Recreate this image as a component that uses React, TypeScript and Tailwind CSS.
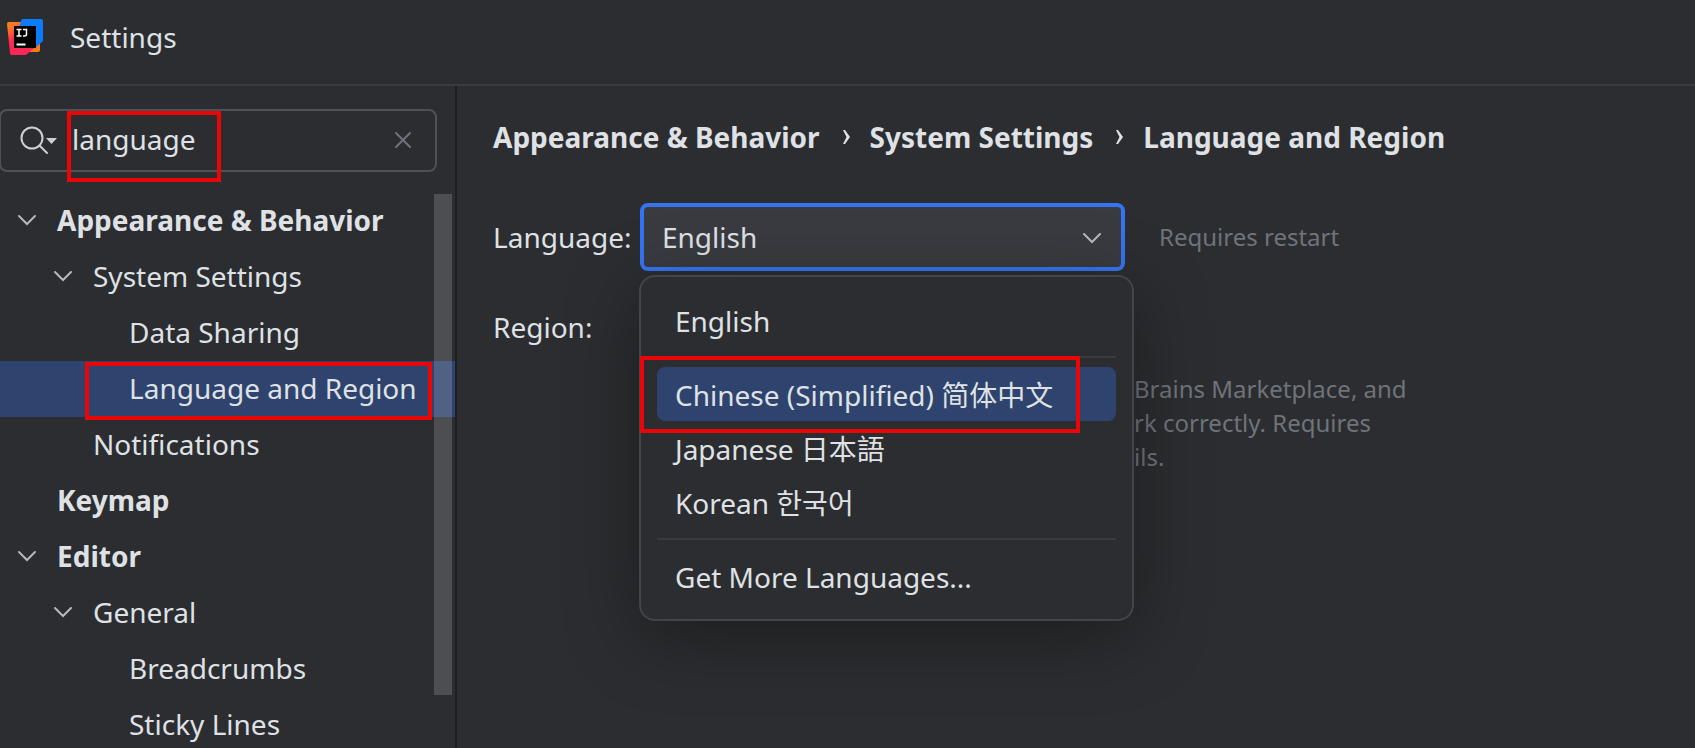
import React, { useState } from "react";

type TreeItem = {
  label: string;
  level: 0 | 1 | 2;
  open?: boolean;
  selected?: boolean;
};

const tree: TreeItem[] = [
  { label: "Appearance & Behavior", level: 0, open: true },
  { label: "System Settings", level: 1, open: true },
  { label: "Data Sharing", level: 2 },
  { label: "Language and Region", level: 2, selected: true },
  { label: "Notifications", level: 1 },
  { label: "Keymap", level: 0 },
  { label: "Editor", level: 0, open: true },
  { label: "General", level: 1, open: true },
  { label: "Breadcrumbs", level: 2 },
  { label: "Sticky Lines", level: 2 },
];

const indents = ["pl-4", "pl-[52px]", "pl-[88px]"];

const crumbs = ["Appearance & Behavior", "System Settings", "Language and Region"];

const Chevron = () => (
  <svg width="22" height="22" viewBox="0 0 22 22" fill="none" stroke="#b4b8bf" strokeWidth="2" strokeLinecap="round">
    <path d="M3 7l8 8 8-8" />
  </svg>
);

const Logo = () => (
  <svg width="36" height="36" viewBox="0 0 36 36">
    <defs>
      <linearGradient id="warm" x1="0" y1="0" x2="0.3" y2="1">
        <stop offset="0" stopColor="#ff8a18" />
        <stop offset="0.3" stopColor="#fc6a2c" />
        <stop offset="0.6" stopColor="#fe2857" />
      </linearGradient>
    </defs>
    <path d="M20 24h13v7a2 2 0 0 1-2 2H20z" fill="#f97a12" />
    <path d="M2 3h14v30l-2 3H5a2 2 0 0 1-2-2L0 5a2 2 0 0 1 2-2z" fill="url(#warm)" />
    <path d="M14 28h15L20 35a3 3 0 0 1-2 1h-6z" fill="#fe2857" />
    <path d="M16 0h18a2 2 0 0 1 2 2v19a3 3 0 0 1-1 2l-6 5L11 12l3-10a2 2 0 0 1 2-2z" fill="#087cfa" />
    <path d="M7 7h22v22H7z" fill="#000" />
    <path d="M9.500 10.500h5M12 10.500v6.500M9.500 17h5M16 10.500h3.500v4.500q0 2-2 2H16" fill="none" stroke="#fff" strokeWidth="1.500" />
    <path d="M9.500 25.500h9" stroke="#fff" strokeWidth="2" />
  </svg>
);

const Separator = () => <li role="separator" className="my-[9px] h-0.5 bg-[#393b40]" />;

const Option = ({ text, selected = false }: { text: string; selected?: boolean }) => (
  <li
    role="option"
    aria-selected={selected}
    className={
      selected
        ? "h-[54px] whitespace-nowrap rounded-lg bg-[#2e436e] px-[18px] leading-[56px]"
        : "h-[54px] whitespace-nowrap px-[18px] leading-[56px]"
    }
  >
    {text}
  </li>
);

const Mark = ({ className }: { className: string }) => (
  <div className={`pointer-events-none absolute border-4 border-[#ea0606] ${className}`} />
);

const Sidebar = () => {
  const [query, setQuery] = useState("language");
  return (
    <aside className="relative flex w-[457px] shrink-0 flex-col overflow-hidden border-r-2 border-[#1e1f22] pt-[23px]">
      <div className="relative -ml-px mr-[18px] flex h-[63px] shrink-0 items-center rounded-lg border-2 border-[#4e5157] pb-0.5 pl-[19px] pr-[23px]">
        <svg className="shrink-0" width="38" height="30" viewBox="0 0 38 30" fill="none">
          <circle cx="12" cy="13" r="10.500" stroke="#ced0d6" strokeWidth="2" />
          <path d="M20 21l7 7" stroke="#ced0d6" strokeWidth="2" strokeLinecap="round" />
          <path d="M26 13h11l-5.500 6z" fill="#ced0d6" />
        </svg>
        <input
          aria-label="Search settings"
          className="ml-3.5 h-12 min-w-0 flex-1 bg-transparent pb-0.5 outline-none"
          value={query}
          onChange={(e) => setQuery(e.target.value)}
        />
        <button aria-label="Clear search" onClick={() => setQuery("")}>
          <svg width="18" height="18" viewBox="0 0 18 18" stroke="#6f737a" strokeWidth="2" strokeLinecap="round">
            <path d="M2 2l14 14M16 2L2 16" />
          </svg>
        </button>
        <Mark className="left-[66px] top-0 h-[71px] w-[154px]" />
      </div>

      <div className="relative mt-[21px]">
        <ul>
          {tree.map((item) => (
            <li
              key={item.label}
              className={`relative flex h-14 items-center pb-0.5 ${indents[item.level]} ${
                item.selected ? "bg-[#2e436e]" : ""
              } ${item.level === 0 ? "font-bold" : ""}`}
            >
              <span className="w-[41px] shrink-0">{item.open && <Chevron />}</span>
              <span className="whitespace-nowrap">{item.label}</span>
              {item.selected && <Mark className="left-[85px] top-px h-[58px] w-[347px]" />}
            </li>
          ))}
        </ul>
        <div className="absolute right-[3px] top-px h-[501px] w-[18px] bg-white/16" />
      </div>
    </aside>
  );
};

const LanguagePopup = () => (
  <div className="absolute -left-px top-[72px] z-10 w-[495px] rounded-2xl border-2 border-[#43454a] bg-[#2b2d30] p-4 shadow-[0_16px_72px_rgba(0,0,0,0.35)]">
    <ul role="listbox" aria-label="Languages">
      <Option text="English" />
      <Separator />
      <Option text="Chinese (Simplified) 简体中文" selected />
      <Option text="Japanese 日本語" />
      <Option text="Korean 한국어" />
      <Separator />
      <Option text="Get More Languages..." />
    </ul>
    <Mark className="-left-px top-[79px] h-[77px] w-[440px]" />
  </div>
);

export default function App() {
  return (
    <div className="flex h-screen flex-col overflow-hidden bg-[#2b2d30] font-['Noto_Sans','Noto_Sans_CJK_SC',sans-serif] text-[28px] leading-9 text-[#dfe1e5]">
      <header className="flex h-[86px] shrink-0 items-center gap-[27px] border-b-2 border-[#393b40] pb-2.5 pl-[7px]">
        <Logo />
        <h1>Settings</h1>
      </header>

      <div className="flex min-h-0 flex-1">
        <Sidebar />

        <main className="min-w-0 flex-1 pl-9 pt-[33px]">
          <nav className="flex items-center gap-[19px] font-bold" aria-label="Breadcrumb">
            {crumbs.map((crumb, i) => (
              <React.Fragment key={crumb}>
                {i > 0 && (
                  <svg width="12" height="16" viewBox="0 0 12 16" fill="#dfe1e5">
                    <path d="M4 1h2l5 7-5 7H4l3.500-7z" />
                  </svg>
                )}
                <span className="whitespace-nowrap">{crumb}</span>
              </React.Fragment>
            ))}
          </nav>

          <div className="mt-12 grid grid-cols-[147px_1fr] items-center">
            <label htmlFor="language">Language:</label>
            <div className="flex items-center gap-[34px]">
              <div className="relative w-[485px]">
                <select
                  id="language"
                  className="block h-[68px] w-full appearance-none rounded-lg border-4 border-[#3574f0] bg-[#393b40] pl-[18px] outline-none"
                >
                  <option>English</option>
                </select>
                <span className="pointer-events-none absolute right-[22px] top-6">
                  <Chevron />
                </span>
                <LanguagePopup />
              </div>
              <span className="text-2xl leading-[34px] text-[#6f737a]">Requires restart</span>
            </div>

            <label htmlFor="region" className="mt-[22px]">Region:</label>
            <select
              id="region"
              className="mt-[22px] h-[68px] w-[485px] appearance-none rounded-lg border-2 border-[#4e5157] pl-[18px]"
            >
              <option>Not specified</option>
            </select>

            <div className="col-start-2 mt-[11px] grid grid-cols-[494px_1fr] text-2xl leading-[34px] text-[#6f737a]">
              <span className="text-right">Jet</span>
              <span>Brains Marketplace, and</span>
              <span className="text-right">wo</span>
              <span>rk correctly. Requires</span>
              <span className="text-right">deta</span>
              <span>ils.</span>
            </div>
          </div>
        </main>
      </div>
    </div>
  );
}
